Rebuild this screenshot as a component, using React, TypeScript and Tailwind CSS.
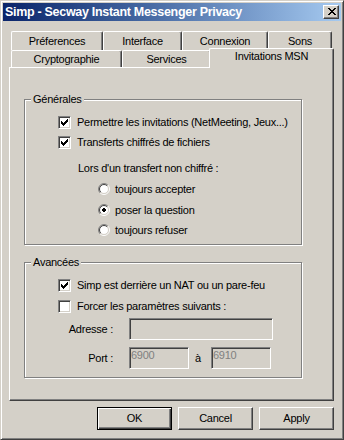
import React from "react";

function CheckMark() {
  return (
    <svg width="7" height="7" viewBox="0 0 7 7" shapeRendering="crispEdges" fill="#000">
      <rect x="6" y="0" width="1" height="1" />
      <rect x="5" y="1" width="2" height="1" />
      <rect x="0" y="2" width="1" height="1" />
      <rect x="4" y="2" width="3" height="1" />
      <rect x="0" y="3" width="2" height="1" />
      <rect x="3" y="3" width="3" height="1" />
      <rect x="0" y="4" width="5" height="1" />
      <rect x="1" y="5" width="3" height="1" />
      <rect x="2" y="6" width="1" height="1" />
    </svg>
  );
}

function Check({ checked }: { checked: boolean }) {
  return (
    <div className="w-[13px] h-[13px] shrink-0 bg-white border border-t-[#808080] border-l-[#808080] border-r-white border-b-white shadow-[inset_1px_1px_0_#404040,inset_-1px_-1px_0_#D4D0C8] flex items-center justify-center">
      {checked && <CheckMark />}
    </div>
  );
}

function Radio({ checked }: { checked: boolean }) {
  return (
    <svg width="12" height="12" viewBox="0 0 12 12" className="shrink-0">
      <circle cx="6" cy="6" r="4.6" fill="#fff" />
      <path d="M2.111 9.889 A5.5 5.5 0 0 1 9.889 2.111" fill="none" stroke="#808080" strokeWidth="1" />
      <path d="M9.889 2.111 A5.5 5.5 0 0 1 2.111 9.889" fill="none" stroke="#ffffff" strokeWidth="1" />
      <path d="M2.818 9.182 A4.5 4.5 0 0 1 9.182 2.818" fill="none" stroke="#404040" strokeWidth="1" />
      <path d="M9.182 2.818 A4.5 4.5 0 0 1 2.818 9.182" fill="none" stroke="#D4D0C8" strokeWidth="1" />
      {checked && (
        <g fill="#000" shapeRendering="crispEdges">
          <rect x="4" y="5" width="4" height="2" />
          <rect x="5" y="4" width="2" height="4" />
        </g>
      )}
    </svg>
  );
}

function CloseGlyph() {
  return (
    <svg width="8" height="7" viewBox="0 0 8 7" shapeRendering="crispEdges" fill="#000">
      <rect x="0" y="0" width="2" height="1" />
      <rect x="6" y="0" width="2" height="1" />
      <rect x="1" y="1" width="2" height="1" />
      <rect x="5" y="1" width="2" height="1" />
      <rect x="2" y="2" width="4" height="1" />
      <rect x="3" y="3" width="2" height="1" />
      <rect x="2" y="4" width="4" height="1" />
      <rect x="1" y="5" width="2" height="1" />
      <rect x="5" y="5" width="2" height="1" />
      <rect x="0" y="6" width="2" height="1" />
      <rect x="6" y="6" width="2" height="1" />
    </svg>
  );
}

const tabBase =
  "flex justify-center border-t border-l border-r border-t-white border-l-white border-r-[#404040] shadow-[inset_-1px_0_0_#808080] rounded-t-[2px] bg-[#D4D0C8] shrink-0";

function Field({ className, value }: { className: string; value?: string }) {
  return (
    <div
      className={
        "h-[22px] shrink-0 bg-[#D4D0C8] border border-t-[#808080] border-l-[#808080] border-r-white border-b-white shadow-[inset_1px_1px_0_#404040,inset_-1px_-1px_0_#D4D0C8] pl-[1px] pt-[1px] text-[#808080] " +
        className
      }
    >
      {value}
    </div>
  );
}

function GroupLabel({ text }: { text: string }) {
  return (
    <div className="-mt-[7px] ml-[6px] px-[2px] w-fit h-[13px] bg-[#D4D0C8]">{text}</div>
  );
}

export default function App() {
  return (
    <div className="w-[344px] h-[440px] bg-[#D4D0C8] border border-t-[#D4D0C8] border-l-[#D4D0C8] border-r-[#404040] border-b-[#404040] shadow-[inset_1px_1px_0_#fff,inset_-1px_-1px_0_#808080] p-[2px] flex flex-col font-['Liberation_Sans',Arial,sans-serif] text-[11px] leading-[13px] tracking-[-0.25px] text-black select-none">
      {/* Title bar */}
      <div className="h-[18px] shrink-0 flex items-center justify-between pl-[2px] pr-[2px] bg-linear-to-r from-[#0A246A] to-[#A6CAF0]">
        <span className="text-white font-bold text-[12.5px] leading-[16px] tracking-[-0.3px] whitespace-nowrap">
          Simp - Secway Instant Messenger Privacy
        </span>
        <div className="w-[16px] h-[14px] border border-t-white border-l-white border-r-[#404040] border-b-[#404040] shadow-[inset_-1px_-1px_0_#808080] bg-[#D4D0C8] flex items-start justify-center pt-[2px] pl-[1px]">
          <CloseGlyph />
        </div>
      </div>

      {/* Body */}
      <div className="flex flex-col pl-[6px] pt-[10px]">
        <div className="w-[325px] flex flex-col">
          {/* Tab row 1 */}
          <div className="h-[19px] flex px-[2px]">
            <div className={tabBase + " w-[92px] h-[19px] items-center pt-[1px]"}>Préferences</div>
            <div className={tabBase + " w-[79px] h-[19px] items-center pt-[1px]"}>Interface</div>
            <div className={tabBase + " w-[86px] h-[19px] items-center pt-[1px]"}>Connexion</div>
            <div className={tabBase + " w-[64px] h-[19px] items-center pt-[1px]"}>Sons</div>
          </div>
          {/* Tab row 2 */}
          <div className="h-[17px] flex px-[2px]">
            <div className={tabBase + " w-[111px] h-[17px] items-center"}>Cryptographie</div>
            <div className={tabBase + " w-[89px] h-[17px] items-center"}>Services</div>
            <div className={tabBase + " relative z-10 w-[125px] h-[20px] -mt-[2px] -mx-[2px] items-start pt-[1px]"}>
              Invitations MSN
            </div>
          </div>
          {/* Panel */}
          <div className="h-[334px] border border-t-white border-l-white border-r-[#404040] border-b-[#404040] shadow-[inset_-1px_-1px_0_#808080] flex flex-col">
            {/* Générales */}
            <div className="ml-[14px] mt-[31px] w-[278px] h-[146px] shrink-0 border border-[#808080] shadow-[inset_1px_1px_0_#fff,1px_1px_0_#fff] flex flex-col">
              <GroupLabel text="Générales" />
              <div className="mt-[6px] h-[20px] flex items-center pl-[33px] gap-[6px]">
                <Check checked />
                <span className="whitespace-nowrap">Permettre les invitations (NetMeeting, Jeux...)</span>
              </div>
              <div className="h-[20px] flex items-center pl-[33px] gap-[6px]">
                <Check checked />
                <span className="whitespace-nowrap">Transferts chiffrés de fichiers</span>
              </div>
              <div className="mt-[6px] h-[20px] flex items-center pl-[53px] whitespace-nowrap">
                Lors d'un transfert non chiffré :
              </div>
              <div className="h-[22px] flex items-center pl-[73px] gap-[5px]">
                <Radio checked={false} />
                <span>toujours accepter</span>
              </div>
              <div className="h-[20px] flex items-center pl-[73px] gap-[5px]">
                <Radio checked />
                <span>poser la question</span>
              </div>
              <div className="h-[20px] flex items-center pl-[73px] gap-[5px]">
                <Radio checked={false} />
                <span>toujours refuser</span>
              </div>
            </div>

            {/* Avancées */}
            <div className="ml-[14px] mt-[17px] w-[278px] h-[116px] shrink-0 border border-[#808080] shadow-[inset_1px_1px_0_#fff,1px_1px_0_#fff] flex flex-col">
              <GroupLabel text="Avancées" />
              <div className="mt-[6px] h-[20px] flex items-center pl-[33px] gap-[6px]">
                <Check checked />
                <span className="whitespace-nowrap">Simp est derrière un NAT ou un pare-feu</span>
              </div>
              <div className="mt-[1px] h-[20px] flex items-center pl-[33px] gap-[6px]">
                <Check checked={false} />
                <span className="whitespace-nowrap">Forcer les paramètres suivants :</span>
              </div>
              <div className="mt-[2px] h-[22px] flex items-center pl-[33px]">
                <span className="w-[56px] text-right pr-[1px] whitespace-nowrap">Adresse :</span>
                <div className="w-[15px]" />
                <Field className="w-[144px]" />
              </div>
              <div className="mt-[7px] h-[22px] flex items-center pl-[33px]">
                <span className="w-[56px] text-right pr-[1px] whitespace-nowrap">Port :</span>
                <div className="w-[15px]" />
                <Field className="w-[60px]" value="6900" />
                <span className="w-[22px] pl-[6px]">à</span>
                <Field className="w-[60px]" value="6910" />
              </div>
            </div>
          </div>
        </div>

        {/* Buttons */}
        <div className="w-[325px] mt-[6px] flex justify-end gap-[6px]">
          <div className="w-[75px] h-[23px] border border-black shadow-[inset_1px_1px_0_#fff,inset_-1px_-1px_0_#404040,inset_-2px_-2px_0_#808080] flex items-center justify-center">
            OK
          </div>
          <div className="w-[75px] h-[23px] border border-t-white border-l-white border-r-[#404040] border-b-[#404040] shadow-[inset_-1px_-1px_0_#808080] flex items-center justify-center">
            Cancel
          </div>
          <div className="w-[75px] h-[23px] border border-t-white border-l-white border-r-[#404040] border-b-[#404040] shadow-[inset_-1px_-1px_0_#808080] flex items-center justify-center">
            Apply
          </div>
        </div>
      </div>
    </div>
  );
}
